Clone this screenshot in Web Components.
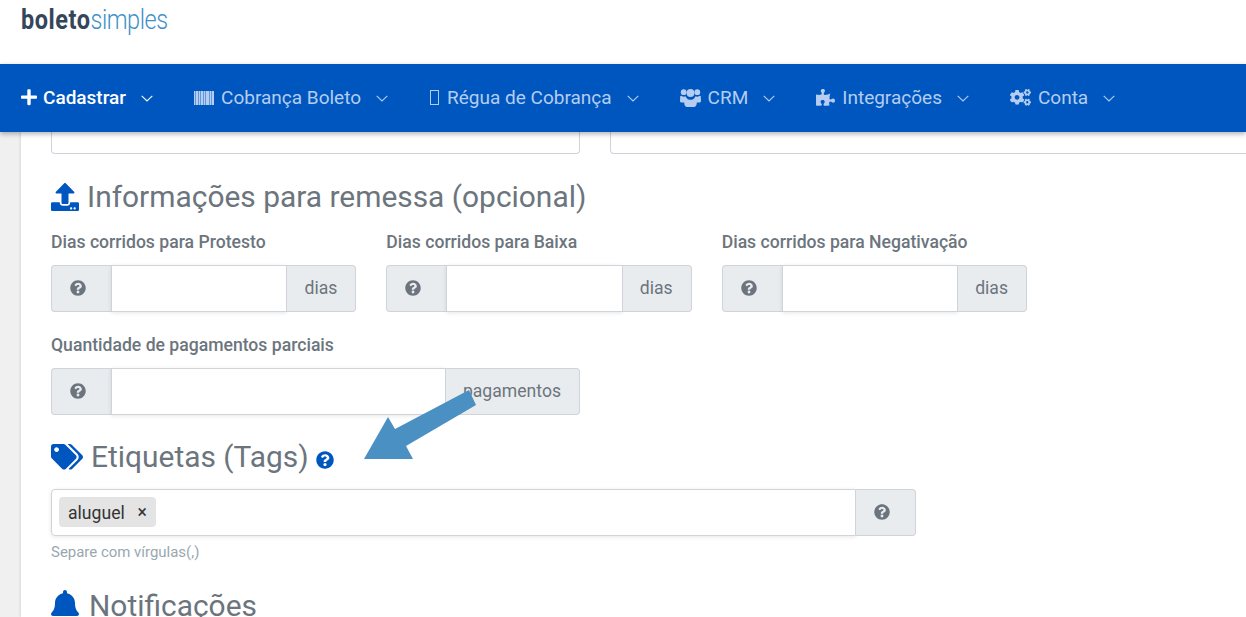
<!DOCTYPE html>
<html lang="pt-BR">
<head>
<meta charset="utf-8">
<title>Boleto Simples</title>
<style>
    html, body { margin: 0; height: 617px; overflow: hidden; background: #fff; font-family: Roboto, "Liberation Sans", sans-serif; }
</style>
</head>
<body>
<boleto-app></boleto-app>

<script>
// font awesome shapes, drawn inline because there is no network
const ICONS = {
    question: [512, 'M504 256c0 136.997-111.043 248-248 248S8 392.997 8 256C8 119.083 119.043 8 256 8s248 111.083 248 248zM262.655 90c-54.497 0-89.255 22.957-116.549 63.758-3.536 5.286-2.353 12.415 2.715 16.258l34.699 26.31c5.205 3.947 12.621 3.008 16.665-2.122 17.864-22.658 30.113-35.797 57.303-35.797 20.429 0 45.698 13.148 45.698 32.958 0 14.976-12.363 22.667-32.534 33.976C247.128 238.528 216 254.941 216 296v4c0 6.627 5.373 12 12 12h56c6.627 0 12-5.373 12-12v-1.333c0-28.462 83.186-29.647 83.186-106.667 0-58.002-60.165-102-116.531-102zM256 338c-25.365 0-46 20.635-46 46 0 25.364 20.635 46 46 46s46-20.636 46-46c0-25.365-20.635-46-46-46z'],
    plus: [448, 'M416 208H272V64c0-17.67-14.33-32-32-32h-32c-17.67 0-32 14.33-32 32v144H32c-17.67 0-32 14.33-32 32v32c0 17.67 14.33 32 32 32h144v144c0 17.67 14.33 32 32 32h32c17.67 0 32-14.33 32-32V304h144c17.67 0 32-14.33 32-32v-32c0-17.67-14.33-32-32-32z'],
    tags: [640, 'M497.941 225.941L286.059 14.059A48 48 0 0 0 252.118 0H48C21.49 0 0 21.49 0 48v204.118a48 48 0 0 0 14.059 33.941l211.882 211.882c18.744 18.745 49.136 18.746 67.882 0l204.118-204.118c18.745-18.745 18.745-49.137 0-67.882zM112 160c-26.51 0-48-21.49-48-48s21.49-48 48-48 48 21.49 48 48-21.49 48-48 48zm513.941 133.823L421.823 497.941c-18.745 18.745-49.137 18.745-67.882 0l-.36-.36L527.64 323.522c16.999-16.999 26.36-39.6 26.36-63.64s-9.362-46.641-26.36-63.64L331.397 0h48.721a48 48 0 0 1 33.941 14.059l211.882 211.882c18.745 18.745 18.745 49.137 0 67.882z'],
    bell: [448, 'M224 512c35.32 0 63.97-28.65 63.97-64H160.03c0 35.35 28.65 64 63.97 64zm215.39-149.71c-19.32-20.76-55.47-51.99-55.47-154.29 0-77.7-54.48-139.9-127.94-155.16V32c0-17.67-14.32-32-31.98-32s-31.98 14.33-31.98 32v20.84C118.56 68.1 64.08 130.3 64.08 208c0 102.3-36.15 133.53-55.47 154.29-6 6.45-8.66 14.16-8.61 21.71.11 16.4 12.98 32 32.1 32h383.8c19.12 0 32.01-15.6 32.1-32 .05-7.55-2.61-15.27-8.61-21.71z'],
    upload: [512, 'M296 384h-80c-13.3 0-24-10.7-24-24V192h-87.7c-17.8 0-26.7-21.5-14.1-34.1L242.3 5.7c7.5-7.5 19.8-7.5 27.3 0l152.2 152.2c12.6 12.6 3.7 34.1-14.1 34.1H320v168c0 13.3-10.7 24-24 24zm216-8v112c0 13.3-10.7 24-24 24H24c-13.3 0-24-10.7-24-24V376c0-13.3 10.7-24 24-24h136v8c0 30.9 25.1 56 56 56h80c30.9 0 56-25.1 56-56v-8h136c13.3 0 24 10.7 24 24zm-124 88c0-11-9-20-20-20s-20 9-20 20 9 20 20 20 20-9 20-20zm64 0c0-11-9-20-20-20s-20 9-20 20 9 20 20 20 20-9 20-20z'],
    puzzle: [576, 'M519.442 288.651c-41.519 0-59.5 31.593-82.058 31.593C377.409 320.244 432 144 432 144s-196.288 80-196.288-3.297c0-35.827 36.288-46.25 36.288-85.985C272 19.216 243.885 0 210.539 0c-34.654 0-66.366 18.891-66.366 56.346 0 41.364 31.711 59.277 31.711 81.75C175.885 207.719 0 166.758 0 166.758v333.237s178.635 41.047 178.635-28.662c0-22.473-40-40.107-40-81.471 0-37.456 29.25-56.346 63.577-56.346 33.673 0 61.788 19.216 61.788 54.717 0 39.735-36.288 50.158-36.288 85.985 0 60.803 129.675 25.73 181.23 25.73 0 0-34.725-120.101 25.827-120.101 35.962 0 46.423 36.152 86.308 36.152C556.712 416 576 387.99 576 354.443c0-34.199-18.962-65.792-56.558-65.792z'],
    cogs: [640, 'M512.1 191l-8.2 14.3c-3 5.3-9.4 7.5-15.1 5.4-11.8-4.4-22.6-10.7-32.1-18.6-4.6-3.8-5.8-10.5-2.8-15.7l8.2-14.3c-6.9-8-12.3-17.3-15.9-27.4h-16.5c-6 0-11.2-4.3-12.2-10.3-2-12-2.1-24.6 0-37.1 1-6 6.2-10.4 12.2-10.4h16.5c3.6-10.1 9-19.4 15.9-27.4l-8.2-14.3c-3-5.2-1.9-11.9 2.8-15.7 9.5-7.9 20.4-14.2 32.1-18.6 5.7-2.1 12.1.1 15.1 5.4l8.2 14.3c10.5-1.9 21.2-1.9 31.7 0L552 6.3c3-5.3 9.4-7.5 15.1-5.4 11.8 4.4 22.6 10.7 32.1 18.6 4.6 3.8 5.8 10.5 2.8 15.7l-8.2 14.3c6.9 8 12.3 17.3 15.9 27.4h16.5c6 0 11.2 4.3 12.2 10.3 2 12 2.1 24.6 0 37.1-1 6-6.2 10.4-12.2 10.4h-16.5c-3.6 10.1-9 19.4-15.9 27.4l8.2 14.3c3 5.2 1.9 11.9-2.8 15.7-9.5 7.9-20.4 14.2-32.1 18.6-5.7 2.1-12.1-.1-15.1-5.4l-8.2-14.3c-10.4 1.9-21.2 1.9-31.7 0zm-10.5-58.8c38.5 29.6 82.4-14.3 52.8-52.8-38.5-29.7-82.4 14.3-52.8 52.8zM386.3 286.1l33.7 16.8c10.1 5.8 14.5 18.1 10.5 29.1-8.9 24.2-26.4 46.4-42.6 65.8-7.4 8.9-20.2 11.1-30.3 5.3l-29.1-16.8c-16 13.7-34.6 24.6-54.9 31.7v33.6c0 11.6-8.3 21.6-19.7 23.6-24.6 4.2-50.4 4.4-75.9 0-11.5-2-20-11.9-20-23.6V418c-20.3-7.2-38.9-18-54.9-31.7L74 403c-10 5.8-22.9 3.6-30.3-5.3-16.2-19.4-33.3-41.6-42.2-65.7-4-10.9.4-23.2 10.5-29.1l33.3-16.8c-3.9-20.9-3.9-42.4 0-63.4L12 205.8c-10.1-5.8-14.6-18.1-10.5-29 8.9-24.2 26-46.4 42.2-65.8 7.4-8.9 20.2-11.1 30.3-5.3l29.1 16.8c16-13.7 34.6-24.6 54.9-31.7V57.1c0-11.5 8.2-21.5 19.6-23.5 24.6-4.2 50.5-4.4 76-.1 11.5 2 20 11.9 20 23.6v33.6c20.3 7.2 38.9 18 54.9 31.7l29.1-16.8c10-5.8 22.9-3.6 30.3 5.3 16.2 19.4 33.2 41.6 42.1 65.8 4 10.9.1 23.2-10 29.1l-33.7 16.8c3.9 21 3.9 42.5 0 63.5zm-117.6 21.1c59.2-77-28.7-164.9-105.7-105.7-59.2 77 28.7 164.9 105.7 105.7zm243.4 182.7l-8.2 14.3c-3 5.3-9.4 7.5-15.1 5.4-11.8-4.4-22.6-10.7-32.1-18.6-4.6-3.8-5.8-10.5-2.8-15.7l8.2-14.3c-6.9-8-12.3-17.3-15.9-27.4h-16.5c-6 0-11.2-4.3-12.2-10.3-2-12-2.1-24.6 0-37.1 1-6 6.2-10.4 12.2-10.4h16.5c3.6-10.1 9-19.4 15.9-27.4l-8.2-14.3c-3-5.2-1.9-11.9 2.8-15.7 9.5-7.9 20.4-14.2 32.1-18.6 5.7-2.1 12.1.1 15.1 5.4l8.2 14.3c10.5-1.9 21.2-1.9 31.7 0l8.2-14.3c3-5.3 9.4-7.5 15.1-5.4 11.8 4.4 22.6 10.7 32.1 18.6 4.6 3.8 5.8 10.5 2.8 15.7l-8.2 14.3c6.9 8 12.3 17.3 15.9 27.4h16.5c6 0 11.2 4.3 12.2 10.3 2 12 2.1 24.6 0 37.1-1 6-6.2 10.4-12.2 10.4h-16.5c-3.6 10.1-9 19.4-15.9 27.4l8.2 14.3c3 5.2 1.9 11.9-2.8 15.7-9.5 7.9-20.4 14.2-32.1 18.6-5.7 2.1-12.1-.1-15.1-5.4l-8.2-14.3c-10.4 1.9-21.2 1.9-31.7 0zM501.6 431c38.5 29.6 82.4-14.3 52.8-52.8-38.5-29.6-82.4 14.3-52.8 52.8z']
};

class FaIcon extends HTMLElement {
    connectedCallback() {
        const [width, d] = ICONS[this.getAttribute('name')];
        const size = this.getAttribute('size') || 16;
        this.attachShadow({ mode: 'open' }).innerHTML = `
            <style>
                :host { display: inline-flex; flex: none; }
                svg { display: block; fill: currentColor; }
            </style>
            <svg width="${size}" viewBox="0 0 ${width} 512"><path d="${d}"/></svg>
        `;
    }
}
customElements.define('fa-icon', FaIcon);

class NavItem extends HTMLElement {
    connectedCallback() {
        const active = this.hasAttribute('active');
        this.attachShadow({ mode: 'open' }).innerHTML = `
            <style>
                :host {
                    display: flex;
                    align-items: center;
                    color: ${active ? '#fff' : '#b4cdf0'};
                    font-size: 19px;
                    font-weight: ${active ? 500 : 400};
                    line-height: 24px;
                    margin-top: -1px;
                    white-space: nowrap;
                }
                .icon { display: flex; margin-right: ${active ? 6 : 7}px; }
                .chevron { margin: 1px 0 0 15px; display: block; }
            </style>
            <span class="icon"><slot name="icon"></slot></span>
            <slot></slot>
            <svg class="chevron" width="12" height="7" viewBox="0 0 12 7" fill="none" stroke="currentColor" stroke-width="1.1"><path d="M.7.8 6 6l5.3-5.2"/></svg>
        `;
    }
}
customElements.define('nav-item', NavItem);

class MainNav extends HTMLElement {
    connectedCallback() {
        this.attachShadow({ mode: 'open' }).innerHTML = `
            <style>
                :host {
                    display: flex;
                    align-items: center;
                    gap: 41px;
                    height: 68px;
                    padding-left: 21px;
                    background: #0056bf;
                    box-shadow: 0 2px 5px rgba(0,0,0,.3);
                    position: relative;
                    z-index: 2;
                }
            </style>
            <slot></slot>
        `;
    }
}
customElements.define('main-nav', MainNav);

class SiteLogo extends HTMLElement {
    connectedCallback() {
        this.attachShadow({ mode: 'open' }).innerHTML = `
            <style>
                :host {
                    display: block;
                    height: 64px;
                    box-sizing: border-box;
                    padding: 2px 0 0 21px;
                    font-size: 27px;
                    line-height: 36px;
                    white-space: nowrap;
                }
                .logo { display: inline-block; transform: scaleX(.87); transform-origin: left; }
                b { color: #34465a; font-weight: 700; letter-spacing: .6px; }
                span span { color: #4090c8; font-weight: 300; letter-spacing: -.5px; }
            </style>
            <span class="logo"><b>boleto</b><span>simples</span></span>
        `;
    }
}
customElements.define('site-logo', SiteLogo);

class SectionTitle extends HTMLElement {
    connectedCallback() {
        this.attachShadow({ mode: 'open' }).innerHTML = `
            <style>
                :host {
                    display: flex;
                    align-items: center;
                    gap: var(--title-gap, 8px);
                    color: #6c757d;
                    font-size: 29.92px;
                    line-height: 36px;
                    white-space: nowrap;
                }
                .icon { display: flex; color: #0056bf; }
            </style>
            <span class="icon"><slot name="icon"></slot></span>
            <slot></slot>
        `;
    }
}
customElements.define('section-title', SectionTitle);

class InputGroup extends HTMLElement {
    connectedCallback() {
        const label = this.getAttribute('label');
        const suffix = this.getAttribute('suffix');
        this.attachShadow({ mode: 'open' }).innerHTML = `
            <style>
                :host { display: block; color: #6c757d; }
                label {
                    display: block;
                    font-size: 17.6px;
                    font-weight: 500;
                    line-height: 24px;
                    margin-bottom: 11px;
                    white-space: nowrap;
                }
                .group { display: flex; height: 46.5px; }
                .addon {
                    display: flex;
                    align-items: center;
                    box-sizing: border-box;
                    background: #e9ecef;
                    border: 1px solid #ced4da;
                    font-size: 17.6px;
                    white-space: nowrap;
                }
                .pre { width: 60px; border-radius: 4px 0 0 4px; border-right: 0; padding-left: 18px; }
                .post { border-radius: 0 4px 4px 0; border-left: 0; flex: none; padding: 0 18px 0 17px; }
                input {
                    flex: 1;
                    min-width: 0;
                    box-sizing: border-box;
                    border: 1px solid #ced4da;
                    background: #fff;
                    box-shadow: 0 1px 4px rgba(0,0,0,.1);
                    padding: 0;
                    outline: none;
                }
            </style>
            <label>${label}</label>
            <div class="group">
                <span class="addon pre"><fa-icon name="question" size="16"></fa-icon></span>
                <input type="text">
                <span class="addon post">${suffix}</span>
            </div>
        `;
    }
}
customElements.define('input-group', InputGroup);

class TagInput extends HTMLElement {
    connectedCallback() {
        this.attachShadow({ mode: 'open' }).innerHTML = `
            <style>
                :host { display: block; width: 865px; color: #6c757d; }
                .group { display: flex; height: 46.5px; }
                .box {
                    flex: 1;
                    display: flex;
                    align-items: center;
                    padding-left: 7px;
                    border: 1px solid #ced4da;
                    border-radius: 4px 0 0 4px;
                    box-shadow: 0 1px 4px rgba(0,0,0,.1);
                }
                .chip {
                    display: flex;
                    align-items: center;
                    width: 97px;
                    height: 30px;
                    box-sizing: border-box;
                    padding: 2px 9px 0;
                    justify-content: space-between;
                    background: #e4e4e4;
                    border-radius: 4px;
                    color: #333;
                    font-size: 17.6px;
                }
                .chip i { font-style: normal; font-size: 17.6px; margin-top: -2px; }
                .addon {
                    width: 60px;
                    display: flex;
                    align-items: center;
                    box-sizing: border-box;
                    padding-left: 18px;
                    background: #e9ecef;
                    border: 1px solid #ced4da;
                    border-left: 0;
                    border-radius: 0 4px 4px 0;
                }
                small { display: block; margin-top: 7.5px; color: #9aa7b0; font-size: 14.96px; line-height: 18px; }
            </style>
            <div class="group">
                <div class="box"><span class="chip">aluguel <i>×</i></span></div>
                <span class="addon"><fa-icon name="question" size="16"></fa-icon></span>
            </div>
            <small><slot></slot></small>
        `;
    }
}
customElements.define('tag-input', TagInput);

class BoletoApp extends HTMLElement {
    connectedCallback() {
        const barcode = [0,2,3,5,7,8,10,12,13,14,16,18,19].map(x => `<rect x="${x}" width="1" height="14"/>`).join('');
        this.attachShadow({ mode: 'open' }).innerHTML = `
            <style>
                :host { display: block; height: 617px; overflow: hidden; position: relative; }
                .page { display: flex; background: #f0f0f0; height: 485px; overflow: hidden; }
                .content {
                    flex: 1;
                    min-width: 0;
                    margin-left: 21px;
                    background: #fff;
                    box-shadow: 0 0 3px rgba(0,0,0,.18);
                    padding-left: 30px;
                }
                .stub { display: flex; gap: 30px; height: 22px; margin-bottom: 25px; }
                .stub div {
                    box-sizing: border-box;
                    border: 1px solid #ced4da;
                    border-top: 0;
                    border-radius: 0 0 4px 4px;
                    background: #fff;
                }
                .stub div:first-child { width: 529px; flex: none; }
                .stub div:last-child { width: 700px; flex: none; }
                .row { display: flex; gap: 30px; margin-top: 15px; }
                .row input-group { width: 305.33px; }
                .row + .row { margin-top: 21.5px; }
                .row + .row input-group { width: 529px; }
                .tags-title { margin-top: 24.5px; --title-gap: 8px; }
                .tags-title .help { color: #0056bf; margin: 5px 0 0 -1px; }
                tag-input { margin-top: 14px; }
                .bell-title { margin-top: 27px; --title-gap: 10px; }
                .arrow { position: absolute; left: 0; top: 0; pointer-events: none; }
                .tofu { width: 9px; height: 15px; margin: 0 1px; border: 1px solid currentColor; box-sizing: border-box; }
                svg.bars, svg.users { display: block; }
                svg.users { fill: currentColor; }
            </style>

            <site-logo></site-logo>

            <main-nav>
                <nav-item active><fa-icon slot="icon" name="plus" size="16"></fa-icon>Cadastrar</nav-item>
                <nav-item><svg slot="icon" class="bars" width="20" height="14" viewBox="0 0 20 14" fill="currentColor"><rect width="20" height="14" opacity=".55"/>${barcode}</svg>Cobrança Boleto</nav-item>
                <nav-item><span slot="icon" class="tofu"></span>Régua de Cobrança</nav-item>
                <nav-item>
                    <svg slot="icon" class="users" width="21" height="19" viewBox="0 0 21 19">
                        <circle cx="3.7" cy="4.2" r="2.9"/><circle cx="17.3" cy="4.2" r="2.9"/><circle cx="10.5" cy="5" r="3.9"/>
                        <path d="M.2 8.6C.2 7.9 1 7.6 1.6 8c1.2.8 2.9.9 4 .3.3 1 1 1.9 1.8 2.4-1.2.6-2.2 2-2.3 3.7H1.6C.6 14.4 0 13.8 0 12.9z"/>
                        <path d="M20.8 8.6c0-.7-.8-1-1.4-.6-1.2.8-2.9.9-4 .3-.3 1-1 1.9-1.8 2.4 1.2.6 2.2 2 2.3 3.7h3.5c1 0 1.6-.6 1.6-1.5z"/>
                        <path d="M6.5 10.4c2.3 1.9 5.7 1.9 8 0 1.5.4 2.3 2 2.3 4.4 0 2.5-1.2 4.2-3 4.2H7.2c-1.8 0-3-1.7-3-4.2 0-2.4.8-4 2.3-4.4z"/>
                    </svg>CRM</nav-item>
                <nav-item><fa-icon slot="icon" name="puzzle" size="19"></fa-icon>Integrações</nav-item>
                <nav-item><fa-icon slot="icon" name="cogs" size="21"></fa-icon>Conta</nav-item>
            </main-nav>

            <div class="page">
                <div class="content">
                    <div class="stub"><div></div><div></div></div>

                    <section-title><fa-icon slot="icon" name="upload" size="28"></fa-icon>Informações para remessa (opcional)</section-title>

                    <div class="row">
                        <input-group label="Dias corridos para Protesto" suffix="dias"></input-group>
                        <input-group label="Dias corridos para Baixa" suffix="dias"></input-group>
                        <input-group label="Dias corridos para Negativação" suffix="dias"></input-group>
                    </div>
                    <div class="row">
                        <input-group label="Quantidade de pagamentos parciais" suffix="pagamentos"></input-group>
                    </div>

                    <section-title class="tags-title"><fa-icon slot="icon" name="tags" size="32"></fa-icon>Etiquetas (Tags) <fa-icon class="help" name="question" size="18"></fa-icon></section-title>

                    <tag-input>Separe com vírgulas(,)</tag-input>

                    <section-title class="bell-title"><fa-icon slot="icon" name="bell" size="28"></fa-icon>Notificações</section-title>
                </div>
            </div>

            <svg class="arrow" width="1246" height="617"><polygon fill="#4a90c2" points="364,459 388,417 395,429 469,390 476,405 406,446 413,459"/></svg>
        `;
    }
}
customElements.define('boleto-app', BoletoApp);
</script>
</body>
</html>
